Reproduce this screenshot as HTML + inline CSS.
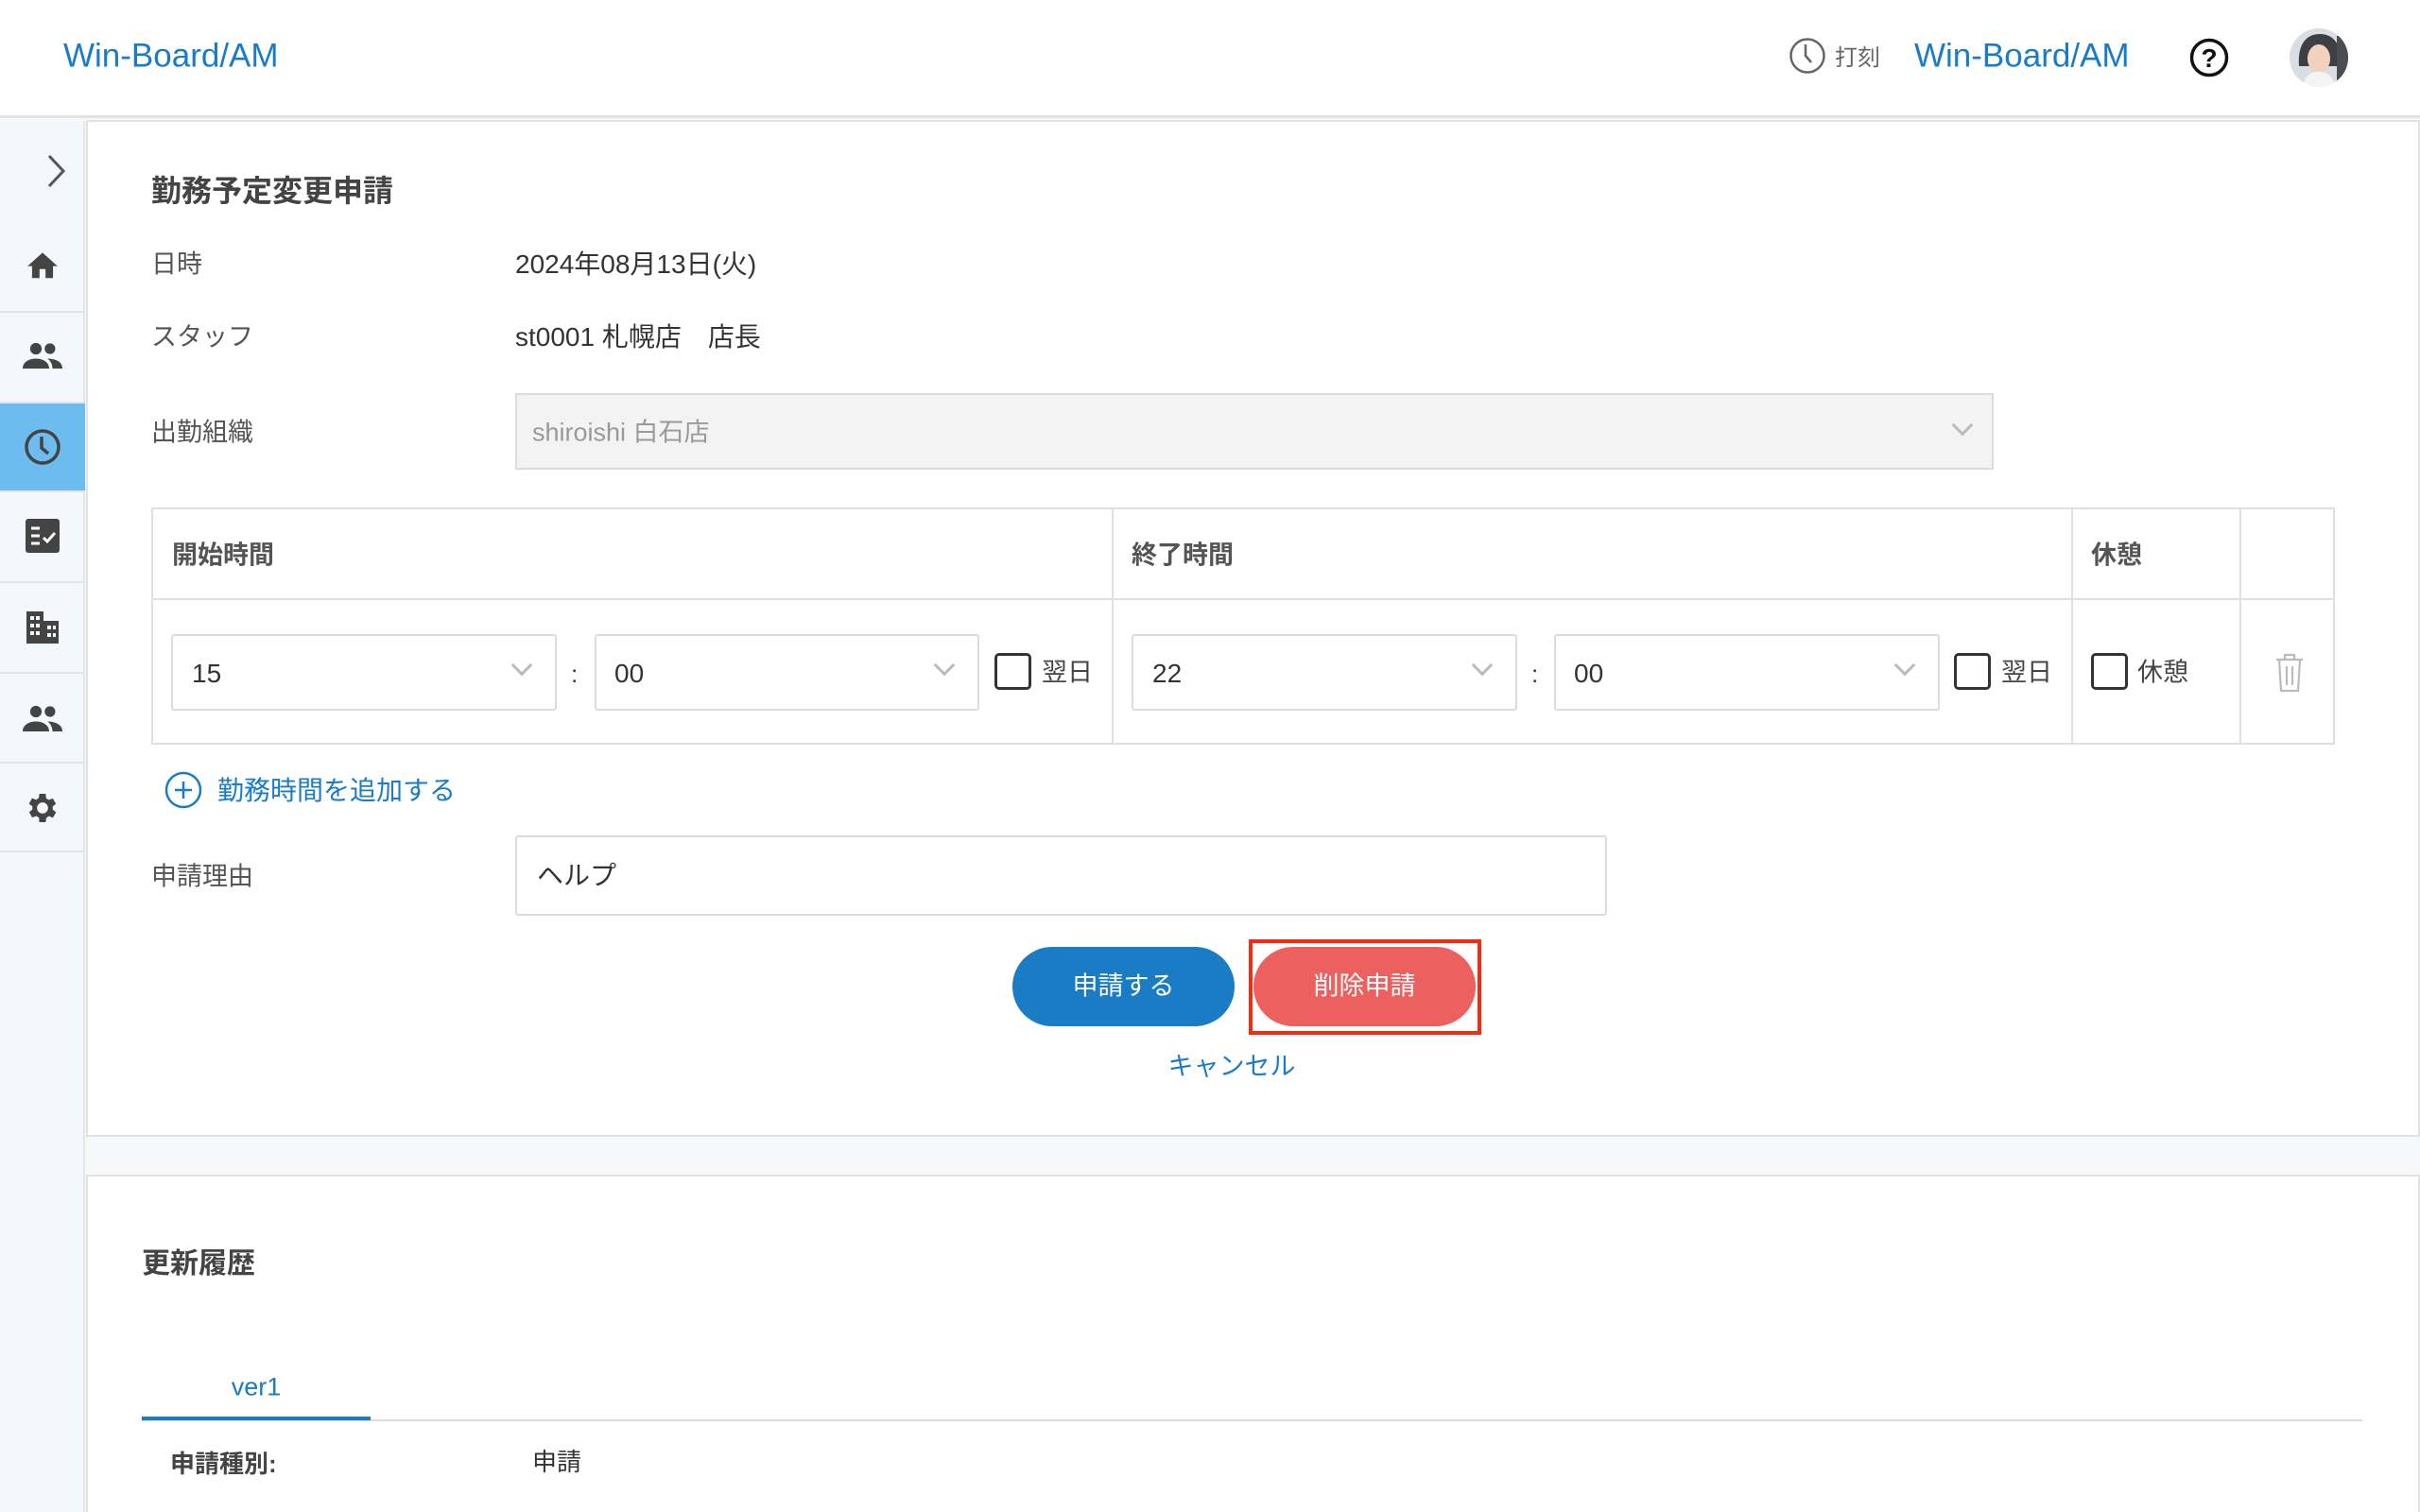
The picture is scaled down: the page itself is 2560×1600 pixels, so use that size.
<!DOCTYPE html>
<html><head><meta charset="utf-8"><style>
*{box-sizing:border-box;margin:0;padding:0}
html{width:2560px;height:1600px;overflow:hidden}
body{width:2560px;height:1600px;overflow:hidden;background:#f7f8fa;font-family:"Liberation Sans","Noto Sans CJK JP",sans-serif;color:#333;position:relative}
.a{position:absolute}
.t{position:absolute;white-space:nowrap;line-height:1;transform:translateY(-50%)}
.hdr{left:0;top:0;width:2560px;height:125px;background:#fff;border-bottom:3px solid #e3e3e3}
.side{left:0;top:128px;width:90px;height:1472px;background:#f4f7fb;border-right:2px solid #e6e6e6}
.sd{position:absolute;left:0;width:90px;height:2px;background:#e4e4e4}
.card{background:#fff;border:2px solid #e2e2e2}
.sel{background:#fff;border:2px solid #dcdcdc;border-radius:3px}
.chev{position:absolute;width:16px;height:16px;border-right:3px solid #bbb;border-bottom:3px solid #bbb;transform:rotate(45deg)}
.cb{position:absolute;width:39px;height:39px;border:3px solid #333;border-radius:5px;background:#fff}
.lbl{font-size:27px;color:#555}
</style></head><body>
<div class="a hdr"></div>
<div class="t" style="left:67px;top:59px;font-size:35px;color:#1a7cc8">Win-Board/AM</div>
<svg class="a" style="left:1892px;top:39px" width="40" height="40" viewBox="0 0 40 40"><circle cx="20" cy="20" r="17.5" fill="none" stroke="#666" stroke-width="2.5"/><path d="M18 8v12l6 7" fill="none" stroke="#666" stroke-width="2.5"/></svg>
<div class="t" style="left:1941px;top:62px;font-size:24px;color:#666">打刻</div>
<div class="t" style="left:2025px;top:59px;font-size:35px;color:#1a7cc8">Win-Board/AM</div>
<svg class="a" style="left:2316px;top:40px" width="42" height="42" viewBox="0 0 42 42"><circle cx="21" cy="21" r="18.5" fill="none" stroke="#111" stroke-width="3.5"/><text x="21" y="31" text-anchor="middle" font-size="28" font-weight="bold" font-family="Liberation Sans" fill="#111">?</text></svg>
<svg class="a" style="left:2422px;top:30px" width="62" height="62" viewBox="0 0 62 62"><defs><clipPath id="c"><circle cx="31" cy="31" r="31"/></clipPath></defs><g clip-path="url(#c)"><rect width="62" height="62" fill="#d9dee3"/><path d="M10 40C8 14 20 6 32 6s24 8 22 34z" fill="#3e3f44"/><ellipse cx="31" cy="32" rx="12" ry="15" fill="#f1d2bd"/><path d="M14 62c2-12 8-16 17-16s15 4 17 16z" fill="#f4f4f4"/><rect x="50" y="8" width="12" height="54" fill="#4a4d52"/></g></svg>

<div class="a side"></div>
<svg class="a" style="left:48px;top:162px" width="24" height="38" viewBox="0 0 24 38"><path d="M4 3l15 16L4 35" fill="none" stroke="#555" stroke-width="3"/></svg>
<div class="sd" style="top:329px"></div><div class="sd" style="top:425px"></div><div class="sd" style="top:519px"></div><div class="sd" style="top:615px"></div><div class="sd" style="top:711px"></div><div class="sd" style="top:806px"></div><div class="sd" style="top:900px"></div>
<div class="a" style="left:0;top:427px;width:90px;height:92px;background:#6cbcf0"></div>
<svg class="a" style="left:26px;top:262px" width="38" height="36" viewBox="0 0 24 22"><path d="M10 20v-6h4v6h5v-8h3L12 3 2 12h3v8z" fill="#444"/></svg>
<svg class="a" style="left:24px;top:358px" width="42" height="36" viewBox="0 0 24 20"><circle cx="8" cy="6" r="3.5" fill="#444"/><circle cx="16.5" cy="6" r="3.2" fill="#444"/><path d="M0 18c0-4 4-6 8-6s8 2 8 6zM15 12c4 0 9 1.5 9 6h-6c0-2.5-1-4.5-3-6z" fill="#444"/></svg>
<svg class="a" style="left:24px;top:452px" width="42" height="42" viewBox="0 0 42 42"><circle cx="21" cy="21" r="17" fill="none" stroke="#444" stroke-width="3.5"/><path d="M20 10v12l7 6" fill="none" stroke="#444" stroke-width="3.5"/></svg>
<svg class="a" style="left:27px;top:549px" width="36" height="36" viewBox="0 0 36 36"><rect width="36" height="36" rx="3" fill="#444"/><path d="M6 10h9M6 18h9M6 26h9" stroke="#fff" stroke-width="3"/><path d="M19 20l4 4 8-9" fill="none" stroke="#fff" stroke-width="3"/></svg>
<svg class="a" style="left:26px;top:645px" width="38" height="36" viewBox="0 0 38 36"><path d="M2 2h18v34H2zM20 12h16v24H20z" fill="#444"/><g fill="#f4f7fb"><rect x="6" y="7" width="4" height="4"/><rect x="12" y="7" width="4" height="4"/><rect x="6" y="15" width="4" height="4"/><rect x="12" y="15" width="4" height="4"/><rect x="6" y="23" width="4" height="4"/><rect x="12" y="23" width="4" height="4"/><rect x="24" y="17" width="4" height="4"/><rect x="24" y="25" width="4" height="4"/><rect x="30" y="17" width="3" height="4"/><rect x="30" y="25" width="3" height="4"/></g></svg>
<svg class="a" style="left:24px;top:742px" width="42" height="36" viewBox="0 0 24 20"><circle cx="8" cy="6" r="3.5" fill="#444"/><circle cx="16.5" cy="6" r="3.2" fill="#444"/><path d="M0 18c0-4 4-6 8-6s8 2 8 6zM15 12c4 0 9 1.5 9 6h-6c0-2.5-1-4.5-3-6z" fill="#444"/></svg>
<svg class="a" style="left:25px;top:835px" width="40" height="40" viewBox="0 0 24 24"><path d="M19.4 13a7.5 7.5 0 000-2l2.1-1.6-2-3.5-2.5 1a7 7 0 00-1.7-1L15 3h-4l-.4 2.8a7 7 0 00-1.7 1l-2.5-1-2 3.5L6.6 11a7.5 7.5 0 000 2l-2.1 1.6 2 3.5 2.5-1a7 7 0 001.7 1L11 21h4l.4-2.8a7 7 0 001.7-1l2.5 1 2-3.5zM13 15.5a3.5 3.5 0 110-7 3.5 3.5 0 010 7z" fill="#444" transform="translate(-1 0)"/></svg>

<div class="a card" style="left:91px;top:127px;width:2469px;height:1076px"></div>
<div class="t" style="left:160px;top:202px;font-size:32px;font-weight:bold;color:#444">勤務予定変更申請</div>
<div class="t lbl" style="left:160px;top:280px">日時</div>
<div class="t" style="left:545px;top:280px;font-size:28px;color:#333">2024年08月13日(火)</div>
<div class="t lbl" style="left:160px;top:357px">スタッフ</div>
<div class="t" style="left:545px;top:357px;font-size:28px;color:#333">st0001 札幌店　店長</div>
<div class="t lbl" style="left:160px;top:458px">出勤組織</div>
<div class="a" style="left:545px;top:416px;width:1564px;height:81px;background:#f3f3f3;border:2px solid #dcdcdc"></div>
<div class="t" style="left:563px;top:458px;font-size:27px;color:#999">shiroishi 白石店</div>
<div class="chev" style="left:2068px;top:442px"></div>

<div class="a" style="left:160px;top:537px;width:2310px;height:251px;border:2px solid #e0e0e0"></div>
<div class="a" style="left:160px;top:633px;width:2310px;height:2px;background:#e0e0e0"></div>
<div class="a" style="left:1176px;top:537px;width:2px;height:251px;background:#e0e0e0"></div>
<div class="a" style="left:2191px;top:537px;width:2px;height:251px;background:#e0e0e0"></div>
<div class="a" style="left:2369px;top:537px;width:2px;height:251px;background:#e0e0e0"></div>
<div class="t" style="left:182px;top:588px;font-size:27px;font-weight:bold;color:#555">開始時間</div>
<div class="t" style="left:1197px;top:588px;font-size:27px;font-weight:bold;color:#555">終了時間</div>
<div class="t" style="left:2212px;top:588px;font-size:27px;font-weight:bold;color:#555">休憩</div>

<div class="a sel" style="left:181px;top:671px;width:408px;height:81px"></div><div class="t" style="left:203px;top:713px;font-size:28px">15</div><div class="chev" style="left:544px;top:696px"></div>
<div class="t" style="left:604px;top:713px;font-size:26px">:</div>
<div class="a sel" style="left:629px;top:671px;width:407px;height:81px"></div><div class="t" style="left:650px;top:713px;font-size:28px">00</div><div class="chev" style="left:991px;top:696px"></div>
<div class="cb" style="left:1052px;top:691px"></div><div class="t" style="left:1102px;top:712px;font-size:27px;color:#444">翌日</div>

<div class="a sel" style="left:1197px;top:671px;width:408px;height:81px"></div><div class="t" style="left:1219px;top:713px;font-size:28px">22</div><div class="chev" style="left:1560px;top:696px"></div>
<div class="t" style="left:1620px;top:713px;font-size:26px">:</div>
<div class="a sel" style="left:1644px;top:671px;width:408px;height:81px"></div><div class="t" style="left:1665px;top:713px;font-size:28px">00</div><div class="chev" style="left:2007px;top:696px"></div>
<div class="cb" style="left:2067px;top:691px"></div><div class="t" style="left:2117px;top:712px;font-size:27px;color:#444">翌日</div>
<div class="cb" style="left:2212px;top:691px"></div><div class="t" style="left:2261px;top:712px;font-size:27px;color:#444">休憩</div>
<svg class="a" style="left:2404px;top:690px" width="36" height="44" viewBox="0 0 36 44"><path d="M4 8h28M13 8V3h10v5M7 8l2 33h18l2-33M15 15v20M21 15v20" fill="none" stroke="#bbb" stroke-width="2.2"/></svg>

<svg class="a" style="left:174px;top:816px" width="40" height="40" viewBox="0 0 40 40"><circle cx="20" cy="20" r="18" fill="none" stroke="#1a7cc8" stroke-width="2.5"/><path d="M20 11v18M11 20h18" stroke="#1a7cc8" stroke-width="2.5"/></svg>
<div class="t" style="left:230px;top:837px;font-size:28px;color:#1a7cc8">勤務時間を追加する</div>

<div class="t lbl" style="left:160px;top:928px">申請理由</div>
<div class="a sel" style="left:545px;top:884px;width:1155px;height:85px"></div>
<div class="t" style="left:568px;top:927px;font-size:28px;color:#333">ヘルプ</div>

<div class="a" style="left:1071px;top:1002px;width:235px;height:84px;border-radius:42px;background:#1a7cc4"></div>
<div class="t" style="left:1071px;width:235px;text-align:center;top:1044px;font-size:27px;color:#fff">申請する</div>
<div class="a" style="left:1321px;top:994px;width:246px;height:101px;border:4px solid #f52a10"></div>
<div class="a" style="left:1326px;top:1002px;width:235px;height:84px;border-radius:42px;background:#ec6060"></div>
<div class="t" style="left:1326px;width:235px;text-align:center;top:1044px;font-size:27px;color:#fff">削除申請</div>
<div class="t" style="left:1203px;width:200px;text-align:center;top:1129px;font-size:27px;color:#1a7cc8">キャンセル</div>

<div class="a card" style="left:91px;top:1243px;width:2469px;height:357px;border-bottom:none"></div>
<div class="t" style="left:150px;top:1338px;font-size:30px;font-weight:bold;color:#444">更新履歴</div>
<div class="t" style="left:150px;width:242px;text-align:center;top:1468px;font-size:27px;color:#1a7cc8">ver1</div>
<div class="a" style="left:150px;top:1502px;width:2349px;height:2px;background:#ddd"></div>
<div class="a" style="left:150px;top:1499px;width:242px;height:4px;background:#1a7cc8"></div>
<div class="t" style="left:180px;top:1549px;font-size:26px;font-weight:bold;color:#444">申請種別:</div>
<div class="t" style="left:563px;top:1547px;font-size:26px;color:#333">申請</div>
</body></html>
